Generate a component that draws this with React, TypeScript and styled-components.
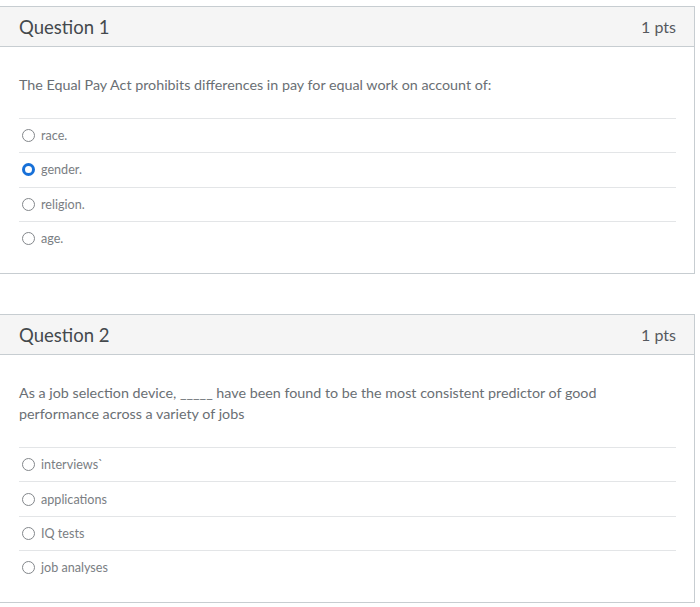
import React from "react";
import styled, { createGlobalStyle } from "styled-components";

const GlobalStyle = createGlobalStyle`
  html, body {
    margin: 0;
    padding: 0;
    background: #ffffff;
  }
  body {
    font-family: Lato, "Open Sans", "Liberation Sans", sans-serif;
    color: #2d3b45;
  }
`;

const Page = styled.div`
  padding-top: 6px;
  display: flex;
  flex-direction: column;
  gap: 40px;
  width: 696px;
  margin-left: -1px;
`;

const Card = styled.section`
  border: 1px solid #c7cdd1;
  background: #fff;
`;

const Header = styled.header`
  height: 39px;
  display: flex;
  align-items: center;
  justify-content: space-between;
  padding: 0 18px 0 19px;
  background: #f5f5f5;
  border-bottom: 1px solid #c7cdd1;
`;

const Title = styled.h2`
  margin: 0;
  font-size: 18.5px;
  font-weight: 400;
  color: #44494d;
`;

const Points = styled.span`
  font-size: 16px;
  color: #55595e;
`;

const Body = styled.div`
  padding: 27px 18px 18px 19px;
`;

const Prompt = styled.p`
  margin: 0 0 23px;
  font-size: 14.3px;
  line-height: 21px;
  color: #6a6f74;
  max-width: 610px;
`;

const Options = styled.ul`
  list-style: none;
  margin: 0;
  padding: 0;
`;

const Option = styled.li`
  box-sizing: border-box;
  display: flex;
  align-items: center;
  gap: 6px;
  height: 34.3px;
  border-top: 1px solid #e3e5e7;
  padding-left: 3px;
  font-size: 12.6px;
  color: #7a7e83;
`;

const Radio = styled.span<{ $checked: boolean }>`
  box-sizing: border-box;
  width: 13px;
  height: 13px;
  border-radius: 50%;
  flex: none;
  background: #fff;
  border: ${(p) => (p.$checked ? "3.5px solid #1770d8" : "1.5px solid #83878b")};
`;

type QuestionProps = {
  number: number;
  prompt: React.ReactNode;
  options: string[];
  selected?: number;
};

function Question({ number, prompt, options, selected }: QuestionProps) {
  return (
    <Card>
      <Header>
        <Title>Question {number}</Title>
        <Points>1 pts</Points>
      </Header>
      <Body>
        <Prompt>{prompt}</Prompt>
        <Options>
          {options.map((opt, i) => (
            <Option key={opt}>
              <Radio $checked={i === selected} />
              {opt}
            </Option>
          ))}
        </Options>
      </Body>
    </Card>
  );
}

export default function App() {
  return (
    <>
      <GlobalStyle />
      <Page>
        <Question
          number={1}
          prompt="The Equal Pay Act prohibits differences in pay for equal work on account of:"
          options={["race.", "gender.", "religion.", "age."]}
          selected={1}
        />
        <Question
          number={2}
          prompt="As a job selection device, _____ have been found to be the most consistent predictor of good performance across a variety of jobs"
          options={["interviews`", "applications", "IQ tests", "job analyses"]}
        />
      </Page>
    </>
  );
}
